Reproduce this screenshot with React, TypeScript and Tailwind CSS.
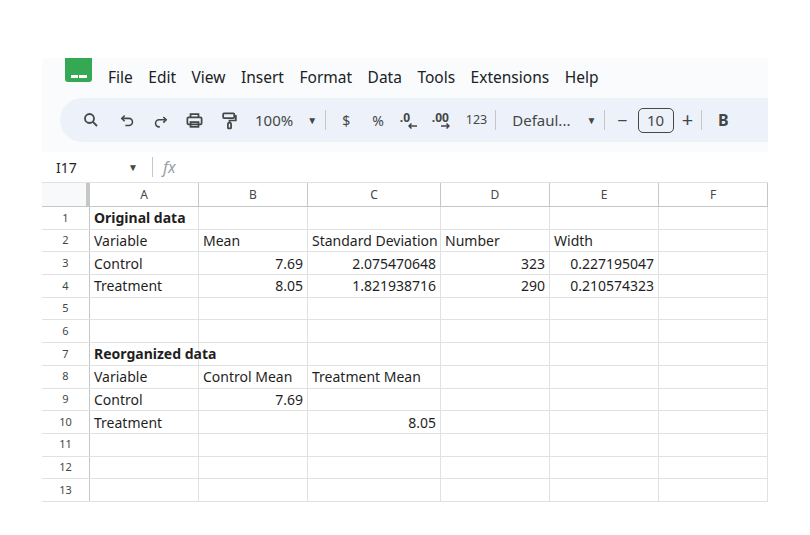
import React from "react";

const cols = [
  { k: "A", w: 109 },
  { k: "B", w: 109 },
  { k: "C", w: 133 },
  { k: "D", w: 109 },
  { k: "E", w: 109 },
  { k: "F", w: 109 },
];

type Cell = { t: string; r?: boolean; b?: boolean };
const rows: Cell[][] = [
  [{ t: "Original data", b: true }],
  [{ t: "Variable" }, { t: "Mean" }, { t: "Standard Deviation" }, { t: "Number" }, { t: "Width" }],
  [{ t: "Control" }, { t: "7.69", r: true }, { t: "2.075470648", r: true }, { t: "323", r: true }, { t: "0.227195047", r: true }],
  [{ t: "Treatment" }, { t: "8.05", r: true }, { t: "1.821938716", r: true }, { t: "290", r: true }, { t: "0.210574323", r: true }],
  [],
  [],
  [{ t: "Reorganized data", b: true }],
  [{ t: "Variable" }, { t: "Control Mean" }, { t: "Treatment Mean" }],
  [{ t: "Control" }, { t: "7.69", r: true }],
  [{ t: "Treatment" }, { t: "" }, { t: "8.05", r: true }],
  [],
  [],
  [],
];

const Sep = () => <div className="w-px h-5 bg-[#c7c7c7] mx-2" />;

export default function App() {
  return (
    <div className="w-[810px] h-[535px] bg-white overflow-hidden font-['Roboto'] text-[#1f1f1f]">
      <div className="ml-[42px] w-[726px] mt-[58px] bg-[#f9fbfd]">
        <div className="h-[40px] flex items-center">
          <div className="ml-[23px] w-[27px] h-[24px] -mt-4 bg-[#34a853] rounded-b-[3px] flex items-end justify-center pb-1">
            <div className="grid grid-cols-2 gap-px w-[16px]">
              <div className="h-[3px] bg-white" />
              <div className="h-[3px] bg-white" />
            </div>
          </div>
          <div className="flex gap-[15.5px] ml-[16px] text-[15.5px] text-[#202124]">
            {["File", "Edit", "View", "Insert", "Format", "Data", "Tools", "Extensions", "Help"].map((m) => (
              <span key={m}>{m}</span>
            ))}
          </div>
        </div>
        <div className="h-[44px] ml-[18px] bg-[#edf2fa] rounded-l-full flex items-center pl-[22px] text-[#444746]">
          <svg width="18" height="18" viewBox="0 0 24 24" fill="none" stroke="#444746" strokeWidth="2.4"><circle cx="10" cy="10" r="6" /><path d="M14.5 14.5 20 20" /></svg>
          <svg className="ml-[19px]" width="17" height="17" viewBox="0 0 24 24" fill="none" stroke="#444746" strokeWidth="2.2"><path d="M8 5 4 9l4 4" /><path d="M4 9h10a5 5 0 0 1 0 10h-5" /></svg>
          <svg className="ml-[16px]" width="17" height="17" viewBox="0 0 24 24" fill="none" stroke="#444746" strokeWidth="2.2"><path d="m16 7 4 4-4 4" /><path d="M20 11H10a5 5 0 0 0 0 10h1" /></svg>
          <svg className="ml-[16px]" width="19" height="19" viewBox="0 0 24 24" fill="none" stroke="#444746" strokeWidth="2.2"><path d="M7 8V4h10v4" /><rect x="3" y="8" width="18" height="9" rx="1.5" /><rect x="7" y="14" width="10" height="6" /></svg>
          <svg className="ml-[16px]" width="19" height="19" viewBox="0 0 24 24" fill="none" stroke="#444746" strokeWidth="2.2"><rect x="4" y="3" width="14" height="6" rx="1" /><path d="M18 6h2v6h-8v3" /><rect x="10" y="15" width="4" height="7" rx="1" /></svg>
          <span className="ml-[16px] text-[15px]">100%</span>
          <span className="ml-[14px] text-[10px]">▼</span>
          <Sep />
          <span className="ml-[8px] text-[14px]">$</span>
          <span className="ml-[22px] text-[14px]">%</span>
          <span className="ml-[16px] w-[20px] text-[12px] font-bold leading-none relative -mt-1">.0
            <svg className="absolute left-[8px] top-[11px]" width="10" height="6" viewBox="0 0 10 6" fill="none" stroke="#444746" strokeWidth="1.5"><path d="M9 3H1M3.5 0.5 1 3l2.5 2.5" /></svg>
          </span>
          <span className="ml-[12px] w-[24px] text-[12px] font-bold leading-none relative -mt-1">.00
            <svg className="absolute left-[8px] top-[11px]" width="10" height="6" viewBox="0 0 10 6" fill="none" stroke="#444746" strokeWidth="1.5"><path d="M1 3h8M6.5 0.5 9 3 6.5 5.5" /></svg>
          </span>
          <span className="ml-[10px] text-[12.5px]">123</span>
          <Sep />
          <span className="ml-[8px] text-[15px]">Defaul...</span>
          <span className="ml-[16px] text-[10px]">▼</span>
          <Sep />
          <span className="ml-[4px] text-[18px] leading-none">−</span>
          <div className="ml-[10px] w-[36px] h-[25px] border border-[#444746] rounded-[5px] flex items-center justify-center text-[15px]">10</div>
          <span className="ml-[8px] text-[20px] leading-none">+</span>
          <Sep />
          <span className="ml-[8px] text-[16px] font-bold">B</span>
        </div>
        <div className="h-[10px]" />
      </div>
      <div className="ml-[42px] w-[726px] h-[30px] flex items-center text-[14px]">
        <span className="ml-[14px] w-[72px]">I17</span>
        <span className="text-[10px] text-[#444746]">▼</span>
        <div className="w-px h-5 bg-[#c7c7c7] ml-[14px]" />
        <span className="ml-[10px] italic text-[#9aa0a6] font-['Liberation_Serif'] text-[16px]">fx</span>
      </div>
      <div className="ml-[42px] w-[726px] text-[14px] font-['Liberation_Sans']">
        <div className="flex h-[25px] border-t border-[#e1e1e1] border-b border-b-[#c4c7c5]">
          <div className="w-[48px] bg-[#f8f9fa] border-r-4 border-[#c4c7c5]" />
          {cols.map((c) => (
            <div key={c.k} style={{ width: c.w }} className="border-r border-[#c4c7c5] flex items-center justify-center text-[12px] text-[#444746]">
              {c.k}
            </div>
          ))}
        </div>
        {rows.map((r, i) => (
          <div key={i} className="flex h-[22.7px] border-b border-[#e1e1e1]">
            <div className="w-[48px] border-r border-[#c4c7c5] flex items-center justify-center text-[11px] text-[#444746]">{i + 1}</div>
            {cols.map((c, j) => {
              const cell = r[j];
              return (
                <div
                  key={c.k}
                  style={{ width: c.w }}
                  className={`border-r border-[#e1e1e1] flex items-center px-[4px] whitespace-nowrap overflow-visible ${cell?.r ? "justify-end" : ""} ${cell?.b ? "font-bold" : ""}`}
                >
                  {cell?.t}
                </div>
              );
            })}
          </div>
        ))}
      </div>
    </div>
  );
}
